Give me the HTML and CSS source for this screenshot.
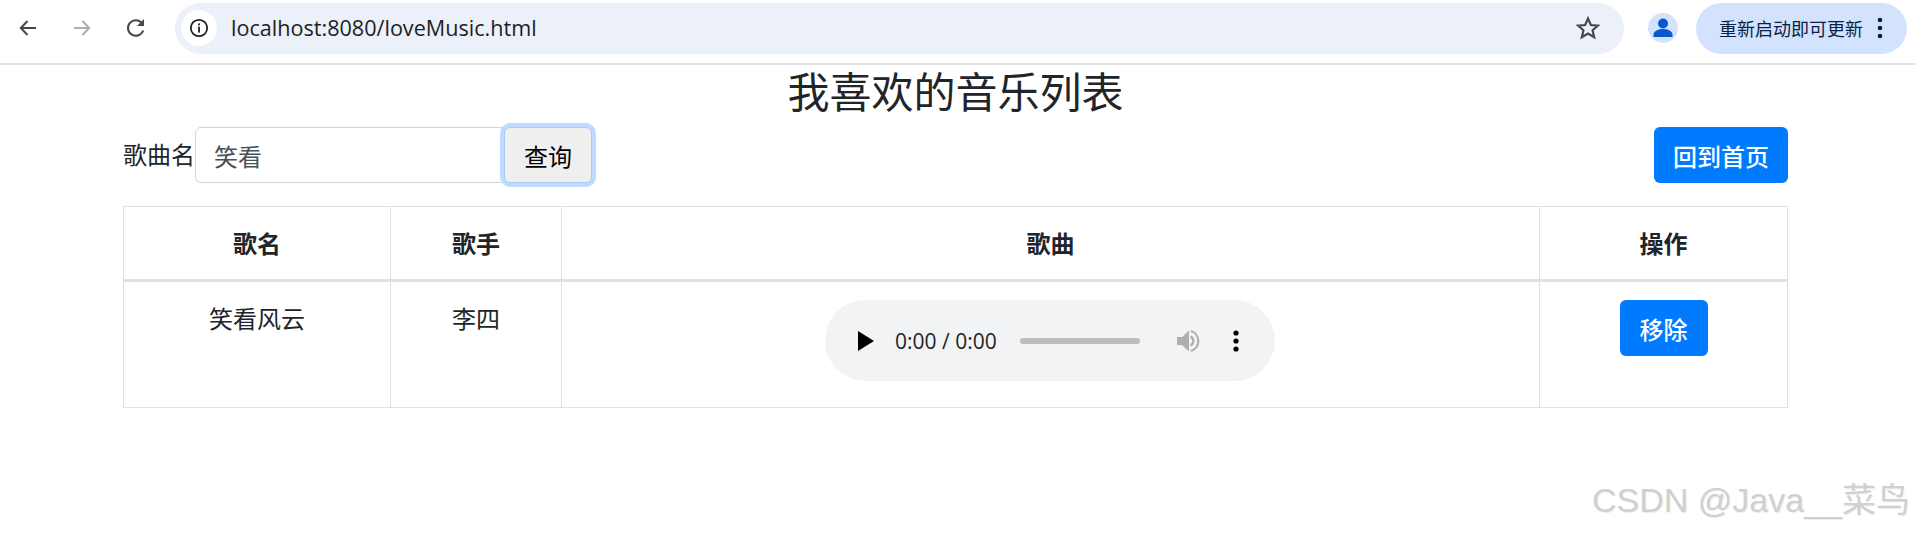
FILE: index.html
```html
<!DOCTYPE html>
<html lang="zh-CN">
<head>
  <meta charset="UTF-8" />
  <title>loveMusic</title>
  <link rel="stylesheet" href="styles.css">
</head>
<body>
  <header class="browser-bar">
    <button class="nav-btn">
      <svg width="24" height="24" viewBox="0 0 24 24"><path d="M20 12H5M11.5 5 4.8 12l6.700 7" fill="none" stroke="#474747" stroke-width="2"/></svg>
    </button>
    <button class="nav-btn">
      <svg width="24" height="24" viewBox="0 0 24 24"><path d="M4 12h15M12.500 5l6.700 7-6.700 7" fill="none" stroke="#adadad" stroke-width="2"/></svg>
    </button>
    <button class="nav-btn">
      <svg width="24" height="24" viewBox="0 0 24 24"><path d="M19.200 14.500A7.800 7.800 0 1 1 18 7.200" fill="none" stroke="#474747" stroke-width="2"/><path d="M20 3v7h-7z" fill="#474747"/></svg>
    </button>
    <div class="address">
      <span class="site-info">
        <svg width="20" height="20" viewBox="0 0 20 20"><circle cx="10" cy="10" r="8.200" fill="none" stroke="#1f1f1f" stroke-width="1.800"/><rect x="9.100" y="8.600" width="1.800" height="6" fill="#1f1f1f"/><rect x="9.100" y="5.400" width="1.800" height="1.900" fill="#1f1f1f"/></svg>
      </span>
      <span class="url">localhost:8080/loveMusic.html</span>
      <svg class="star" width="26" height="26" viewBox="0 0 24 24"><path d="M12 3.200l2.600 6 6.500.6-4.900 4.300 1.500 6.400-5.700-3.400-5.700 3.400 1.500-6.400-4.900-4.300 6.500-.6z" fill="none" stroke="#474747" stroke-width="2"/></svg>
    </div>
    <span class="avatar">
      <svg width="30" height="30" viewBox="0 0 30 30"><circle cx="15" cy="10.500" r="5" fill="#0b57d0"/><path d="M5.500 24v-2.500c0-3.500 5-5.500 9.500-5.500s9.500 2 9.500 5.500V24z" fill="#0b57d0"/></svg>
    </span>
    <div class="update-pill">
      <span>重新启动即可更新</span>
      <svg width="6" height="24" viewBox="0 0 6 24"><circle cx="3" cy="4" r="2.300" fill="#0a1f44"/><circle cx="3" cy="12" r="2.300" fill="#0a1f44"/><circle cx="3" cy="20" r="2.300" fill="#0a1f44"/></svg>
    </div>
  </header>

  <main class="page">
    <h3 class="page-title">我喜欢的音乐列表</h3>
    <div class="search-row">
      <div class="search-form">
        <label class="search-label">歌曲名</label>
        <input class="search-input" type="text" value="笑看">
        <button class="search-btn">查询</button>
      </div>
      <button class="btn-blue">回到首页</button>
    </div>

    <table class="music-table">
      <colgroup>
        <col class="col-name"><col class="col-singer"><col class="col-song"><col class="col-op">
      </colgroup>
      <thead>
        <tr><th>歌名</th><th>歌手</th><th>歌曲</th><th>操作</th></tr>
      </thead>
      <tbody>
        <tr>
          <td>笑看风云</td>
          <td>李四</td>
          <td>
            <div class="player">
              <svg class="play" width="20" height="22" viewBox="0 0 20 22"><path d="M2 1l16 10L2 21z" fill="#000"/></svg>
              <span class="time">0:00 / 0:00</span>
              <span class="track"></span>
              <svg class="volume" width="26" height="26" viewBox="0 0 26 26"><path d="M2 9h5l7-6.500v21L7 17H2z" fill="#aeaeae"/><path d="M15.500 8.500a5 5 0 0 1 0 9M16 3a10.500 10.500 0 0 1 0 20" fill="none" stroke="#aeaeae" stroke-width="2.200"/></svg>
              <svg class="menu" width="6" height="22" viewBox="0 0 6 22"><circle cx="3" cy="3" r="2.600" fill="#000"/><circle cx="3" cy="11" r="2.600" fill="#000"/><circle cx="3" cy="19" r="2.600" fill="#000"/></svg>
            </div>
          </td>
          <td class="op-cell"><button class="btn-blue">移除</button></td>
        </tr>
      </tbody>
    </table>
  </main>

  <div class="watermark">CSDN @Java__菜鸟</div>
</body>
</html>
```

FILE: styles.css
```css
* { box-sizing: border-box; }
body {
  margin: 0;
  height: 534px;
  overflow: hidden;
  position: relative;
  background: #fff;
  color: #212529;
  font-family: "Noto Sans CJK SC", "Noto Sans", sans-serif;
  font-size: 24px;
  line-height: 36px;
}
button { font-family: inherit; }

/* browser chrome */
.browser-bar {
  display: flex;
  align-items: center;
  height: 65px;
  padding: 0 0 7px 10px;
  border-bottom: 2px solid #e1e1e1;
  background: #fff;
}
.nav-btn {
  width: 36px;
  height: 36px;
  margin-right: 18px;
  padding: 0;
  display: flex;
  align-items: center;
  justify-content: center;
  border: none;
  background: none;
}
.nav-btn:nth-of-type(3) { margin-right: 21px; }
.address {
  display: flex;
  align-items: center;
  width: 1449px;
  height: 51px;
  padding: 0 23px 0 6px;
  border-radius: 26px;
  background: #ebf0f9;
}
.site-info {
  display: flex;
  align-items: center;
  justify-content: center;
  width: 36px;
  height: 36px;
  border-radius: 50%;
  background: #fff;
}
.url {
  flex: 1;
  margin-left: 14px;
  font-family: "Open Sans", "Noto Sans", sans-serif;
  font-size: 21.6px;
  color: #1f1f1f;
}
.avatar {
  display: flex;
  align-items: center;
  justify-content: center;
  width: 30px;
  height: 30px;
  margin-left: 24px;
  border-radius: 50%;
  background: #d3e3fd;
}
.update-pill {
  display: flex;
  align-items: center;
  gap: 14px;
  width: 211px;
  height: 51px;
  margin-left: 18px;
  padding-left: 23px;
  border-radius: 26px;
  background: #d3e3fd;
  color: #0a1f44;
  font-size: 18px;
  white-space: nowrap;
}

/* page */
.page { padding: 0 127px 0 123px; }
.page-title {
  margin: 0 0 12px;
  text-align: center;
  font-size: 42px;
  font-weight: 400;
  line-height: 50px;
}
.search-row {
  display: flex;
  justify-content: space-between;
  margin-bottom: 23px;
}
.search-form { display: flex; }
.search-label {
  width: 72px;
  line-height: 54px;
}
.search-input {
  width: 309px;
  height: 56px;
  padding: 0 18px;
  border: 1px solid #ced4da;
  border-radius: 6px 0 0 6px;
  font-family: inherit;
  font-size: 24px;
  color: #495057;
}
.search-btn {
  width: 88px;
  height: 56px;
  padding: 0;
  border: 1px solid #a9cdf5;
  border-radius: 6px;
  background: #efefef;
  color: #000;
  font-size: 24px;
  box-shadow: 0 0 0 4px #bedcff;
}
.btn-blue {
  height: 56px;
  padding: 0 19px;
  border: none;
  border-radius: 6px;
  background: #007bff;
  color: #fff;
  font-size: 24px;
  font-weight: 500;
}
.op-cell .btn-blue { padding: 0 20px; }

/* table */
.music-table {
  width: 1664px;
  table-layout: fixed;
  border-collapse: collapse;
}
.col-name { width: 267px; }
.col-singer { width: 171px; }
.col-song { width: 978px; }
.col-op { width: 248px; }
.music-table th,
.music-table td {
  padding: 18px;
  border: 1.500px solid #dee2e6;
  text-align: center;
  vertical-align: top;
}
.music-table th {
  font-weight: 700;
  border-bottom: 3px solid #dee2e6;
}

/* audio player */
.player {
  display: flex;
  align-items: center;
  width: 450px;
  height: 81px;
  margin: 0 auto 8px 245px;
  padding-left: 31px;
  border-radius: 41px;
  background: #f1f3f4;
}
.time {
  margin-left: 19px;
  font-family: "Open Sans", "Noto Sans", sans-serif;
  font-size: 21px;
  color: #1f1f1f;
  white-space: nowrap;
}
.track {
  width: 120px;
  height: 6px;
  margin-left: 23px;
  border-radius: 3px;
  background: #bcbdbe;
}
.volume { margin-left: 35px; }
.menu { margin-left: 32px; }

.watermark {
  position: absolute;
  right: 5px;
  bottom: 12px;
  font-family: "Liberation Sans", "Noto Sans CJK SC", sans-serif;
  font-size: 34px;
  line-height: 44px;
  color: #d0d0d0;
  text-shadow: 1px 1px 1px #ececec;
  white-space: nowrap;
}
```
